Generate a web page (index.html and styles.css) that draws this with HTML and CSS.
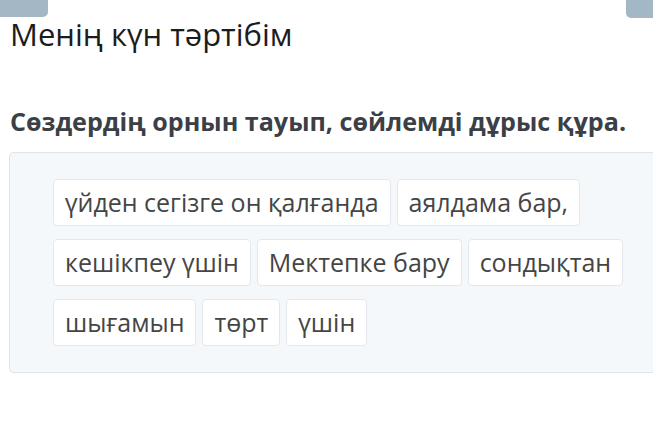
FILE: index.html
```html
<!DOCTYPE html>
<html lang="kk">
<head>
<meta charset="utf-8">
<link rel="stylesheet" href="styles.css">
</head>
<body>
<div class="tabs">
  <div class="tab tab-left"></div>
  <div class="tab tab-right"></div>
</div>
<h1 class="title">Менің күн тәртібім</h1>
<h2 class="question">Сөздердің орнын тауып, сөйлемді дұрыс құра.</h2>
<div class="box">
  <div class="chips">
    <span class="chip">үйден сегізге он қалғанда</span>
    <span class="chip">аялдама бар,</span>
    <span class="chip">кешікпеу үшін</span>
    <span class="chip">Мектепке бару</span>
    <span class="chip">сондықтан</span>
    <span class="chip">шығамын</span>
    <span class="chip">төрт</span>
    <span class="chip">үшін</span>
  </div>
</div>
</body>
</html>
```

FILE: styles.css
```css
html, body {
  margin: 0;
  padding: 0;
  background: #ffffff;
  overflow: hidden;
  font-family: "Open Sans", "Noto Sans", sans-serif;
}
.tabs {
  display: flex;
  justify-content: space-between;
  height: 17px;
}
.tab {
  background: #a3b7c5;
}
.tab-left {
  width: 48px;
  height: 17px;
  border-bottom-right-radius: 5px;
}
.tab-right {
  width: 27px;
  height: 18px;
  border-bottom-left-radius: 5px;
}
.title {
  margin: 0;
  padding-left: 10px;
  font-weight: 400;
  font-size: 31px;
  line-height: 34px;
  color: #1c1c1c;
}
.question {
  margin: 55px 0 0;
  padding-left: 10px;
  font-weight: 700;
  font-size: 25.1px;
  line-height: 30px;
  color: #3b4046;
  white-space: nowrap;
}
.box {
  margin: 16px 0 0 9px;
  background: #f5f8fb;
  border: 1px solid #dfe4e8;
  border-right: none;
  border-radius: 5px 0 0 5px;
  padding: 26px 20px 26px 43px;
}
.chips {
  display: flex;
  flex-wrap: wrap;
  gap: 13px 6px;
}
.chip {
  background: #ffffff;
  border: 1px solid #e4e8ec;
  border-radius: 4px;
  padding: 4px 11px;
  font-size: 25px;
  line-height: 37px;
  color: #454545;
}
```
